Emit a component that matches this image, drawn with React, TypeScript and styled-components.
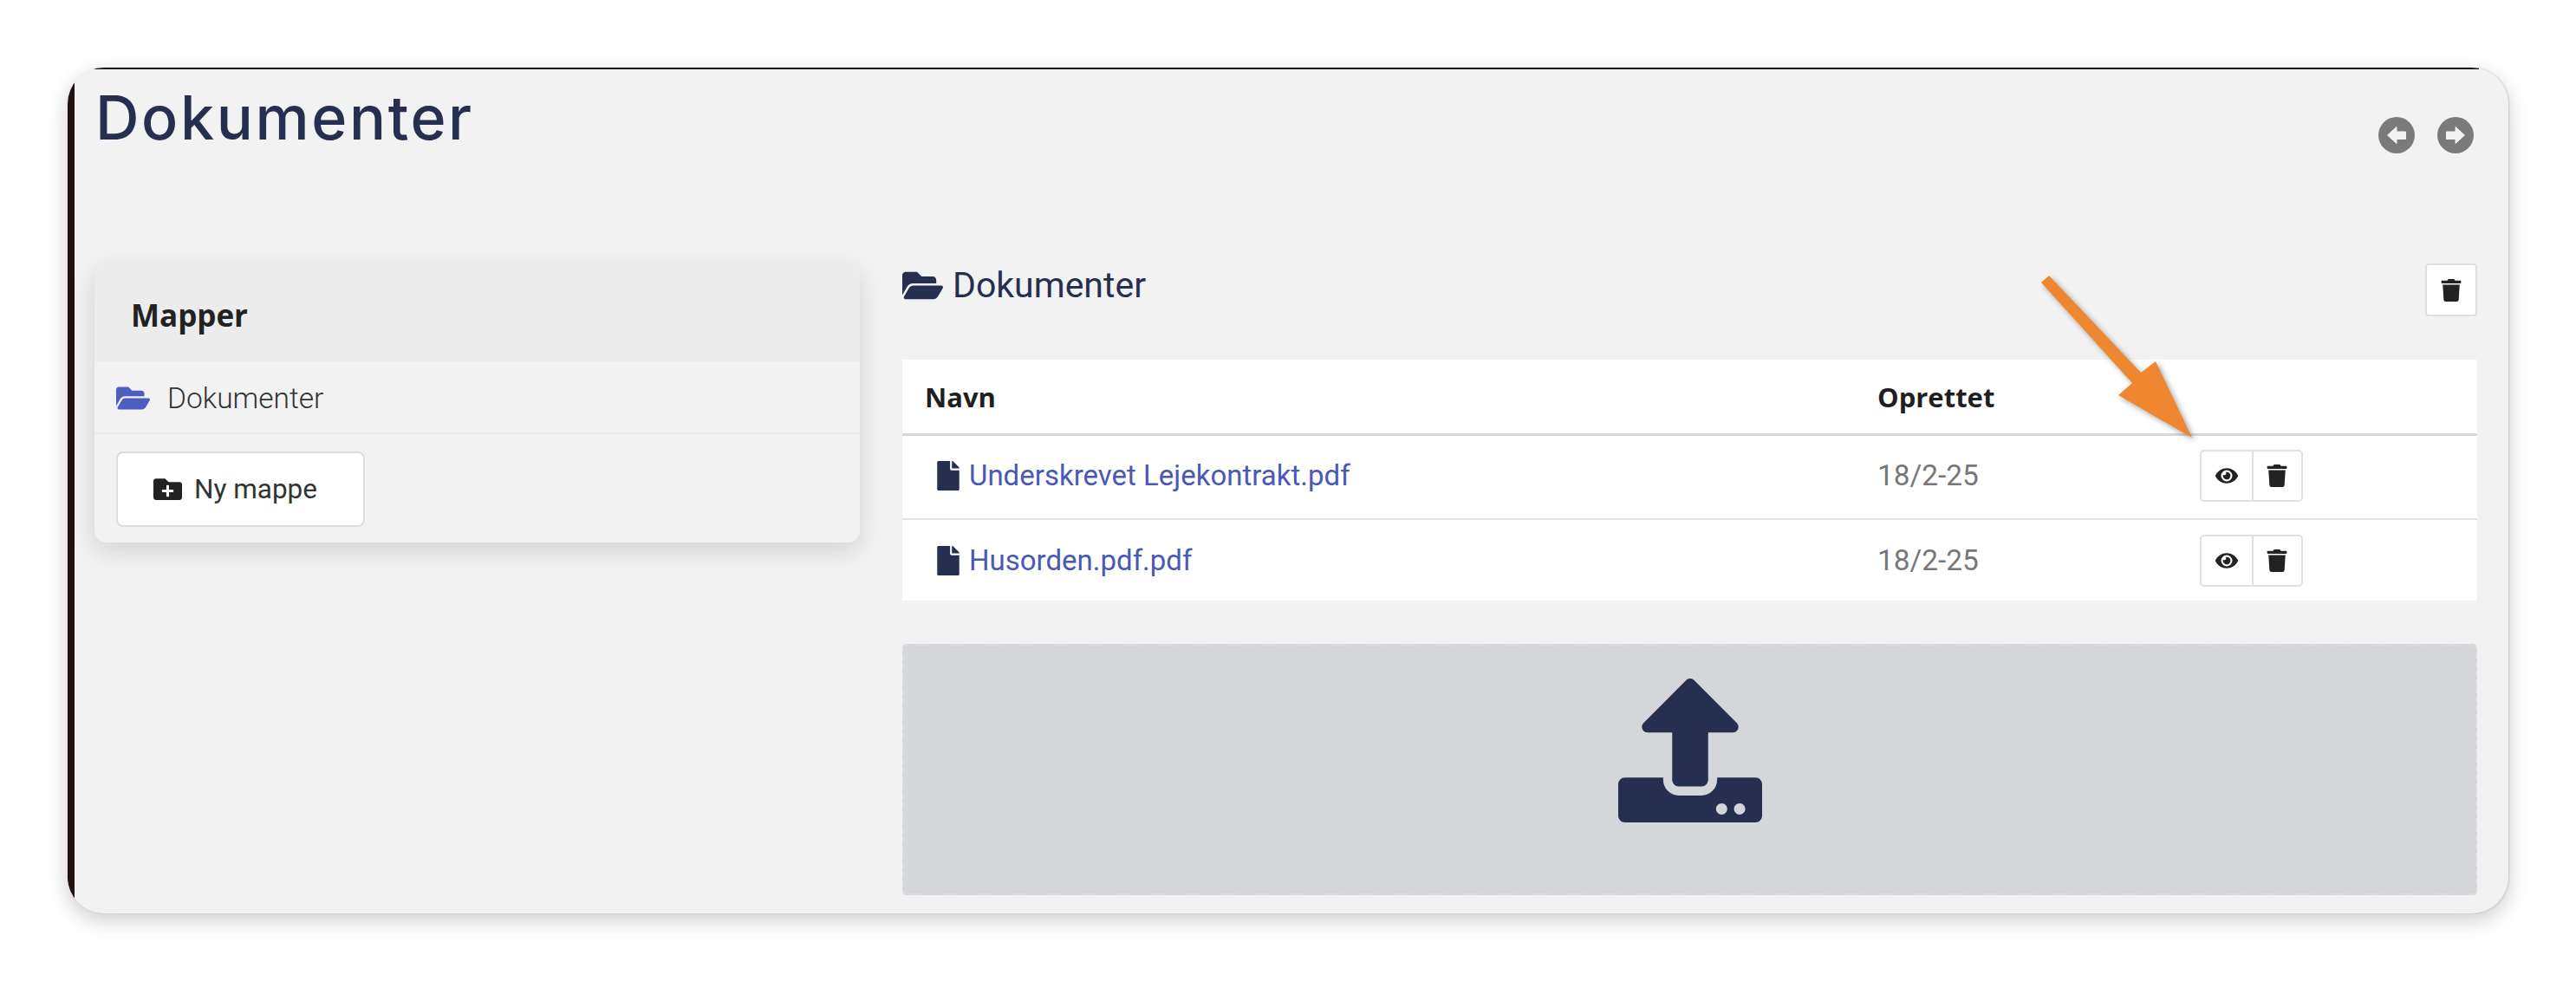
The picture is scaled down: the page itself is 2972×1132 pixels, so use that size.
import React from "react";
import styled, { createGlobalStyle } from "styled-components";
import { FaEye, FaFile, FaFolderOpen, FaFolderPlus, FaTrash, FaUpload } from "react-icons/fa";

const Global = createGlobalStyle`
  html, body { margin: 0; padding: 0; background: #fff; }
  body { font-family: Roboto, "Liberation Sans", sans-serif; width: 2972px; height: 1132px; overflow: hidden; }
`;
const Page = styled.div`
  padding: 78px;
  position: relative;
`;
const Panel = styled.main`
  box-sizing: border-box;
  position: relative;
  overflow: hidden;
  width: 2816px;
  height: 976px;
  background: #f2f2f2;
  border-radius: 42px;
  box-shadow: 0 8px 24px rgba(0,0,0,.2), 1px 0 2px rgba(0,0,0,.15);
  padding: 0 36px 0 31px;
  &::before {
    content: "";
    position: absolute;
    inset: 0 auto 0 0;
    width: 8px;
    background: #1f1210;
  }
  &::after {
    content: "";
    position: absolute;
    top: 0;
    left: 30px;
    right: 34px;
    height: 2px;
    background: #1a1a1a;
  }
`;
const TitleRow = styled.header`
  display: flex;
  justify-content: space-between;
  height: 224px;
`;
const Title = styled.h1`
  margin: 0;
  padding: 14px 0 0 1px;
  height: fit-content;
  font: 500 70px/88px Inter, "Noto Sans", sans-serif;
  letter-spacing: 2.6px;
  color: #262f4f;
`;
const Nav = styled.nav`
  display: flex;
  gap: 26px;
  padding: 57px 4px 0 0;
  height: fit-content;
  svg { display: block; width: 42px; height: 42px; }
`;
const Columns = styled.div`
  display: grid;
  grid-template-columns: 883px 1817px;
  column-gap: 49px;
`;
const Card = styled.aside`
  height: 324px;
  border-radius: 14px;
  overflow: hidden;
  background: #f2f2f2;
  box-shadow: 0 10px 28px rgba(0,0,0,.13);
`;
const CardHead = styled.div`
  height: 115px;
  background: #ececec;
  display: flex;
  align-items: center;
  padding: 7px 0 0 42px;
  font: 700 35px "Open Sans", sans-serif;
  color: #222;
  box-sizing: border-box;
`;
const FolderRow = styled.div`
  box-sizing: border-box;
  height: 84px;
  display: flex;
  align-items: center;
  gap: 20px;
  padding: 3px 0 0 25px;
  border-bottom: 2px solid #ebebeb;
  font: 300 33.5px Roboto, sans-serif;
  color: #333;
  svg { color: #4c5fc0; font-size: 39px; }
`;
const CardBody = styled.div`
  padding: 20px 25px;
`;
const NewButton = styled.button`
  box-sizing: border-box;
  width: 287px;
  height: 87px;
  background: #fff;
  border: 2px solid #dcdcdc;
  border-radius: 8px;
  display: flex;
  align-items: center;
  justify-content: center;
  gap: 14px;
  font: 400 31.5px Roboto, sans-serif;
  color: #333;
  padding: 0 12px 0 0;
  svg { color: #222; font-size: 33px; }
`;
const Heading = styled.div`
  height: 113px;
  display: flex;
  justify-content: space-between;
  align-items: flex-start;
`;
const HeadingLabel = styled.h2`
  margin: 0;
  display: flex;
  align-items: center;
  gap: 11px;
  font: 400 41px/54px Roboto, sans-serif;
  color: #262f4f;
  svg { font-size: 47px; }
`;
const IconButton = styled.button`
  box-sizing: border-box;
  width: 60px;
  height: 61px;
  margin-top: 2px;
  padding: 0;
  background: #fff;
  border: 2px solid #dedede;
  border-radius: 4px;
  display: flex;
  align-items: center;
  justify-content: center;
  color: #222;
  font-size: 26px;
`;
const Table = styled.div`
  background: #fff;
`;
const Row = styled.div<{ $head?: boolean; $last?: boolean }>`
  box-sizing: border-box;
  display: grid;
  grid-template-columns: 1097px 373px 1fr;
  align-items: center;
  height: ${p => (p.$head ? 88 : p.$last ? 93 : 97)}px;
  padding-bottom: ${p => (p.$head || p.$last ? 0 : 4)}px;
  border-bottom: ${p => (p.$head ? "3px solid #d8d8d8" : p.$last ? "none" : "2px solid #e2e2e2")};
`;
const HeadCell = styled.div`
  padding-left: 26px;
  font: 700 31px "Open Sans", sans-serif;
  color: #1f1f1f;
  & + & { padding-left: 28px; }
`;
const NameCell = styled.div`
  padding-left: 36px;
  display: flex;
  align-items: center;
  gap: 7px;
  svg { color: #262f4f; font-size: 34px; }
`;
const FileLink = styled.a`
  font: 400 33px Roboto, sans-serif;
  color: #4a59b5;
`;
const DateCell = styled.div`
  padding-left: 28px;
  font: 400 33.4px Roboto, sans-serif;
  color: #777;
`;
const ActionCell = styled.div`
  padding-left: 27px;
`;
const ActionGroup = styled.div`
  box-sizing: border-box;
  width: 119px;
  height: 60px;
  display: grid;
  grid-template-columns: 1fr 1fr;
  background: #fff;
  border: 2px solid #e0e0e0;
  border-radius: 5px;
`;
const ActionIcon = styled.span`
  display: flex;
  align-items: center;
  justify-content: center;
  color: #222;
  font-size: 26px;
  & + & { border-left: 2px solid #e0e0e0; }
`;
const Drop = styled.div`
  margin-top: 50px;
  height: 290px;
  box-sizing: border-box;
  padding-top: 38px;
  background: #d5d6da;
  border: 2px dashed #dcdde0;
  border-radius: 5px;
  display: flex;
  justify-content: center;
  color: #262f4f;
  font-size: 166px;
  svg { display: block; }
`;
const Callout = styled.svg`
  position: absolute;
  left: 2340px;
  top: 310px;
  width: 210px;
  height: 210px;
  overflow: visible;
  filter: drop-shadow(3px 3px 3px rgba(0,0,0,.35));
`;

const ArrowCircle = ({ flip }: { flip?: boolean }) => (
  <svg viewBox="0 0 42 42">
    <g transform={flip ? "translate(42 0) scale(-1 1)" : undefined}>
      <circle cx="21" cy="21" r="21" fill="#7a7a7a" />
      <path
        d="M10.5 21 L21 11.5 V17 H31.5 V25.5 H21 V30.5 Z"
        fill="#f2f2f2"
        stroke="#f2f2f2"
        strokeWidth="1"
        strokeLinejoin="round"
      />
    </g>
  </svg>
);

const files = ["Underskrevet Lejekontrakt.pdf", "Husorden.pdf.pdf"];

export default function App() {
  return (
    <Page>
      <Global />
      <Panel>
        <TitleRow>
          <Title>Dokumenter</Title>
          <Nav>
            <ArrowCircle />
            <ArrowCircle flip />
          </Nav>
        </TitleRow>
        <Columns>
          <Card>
            <CardHead>Mapper</CardHead>
            <FolderRow><FaFolderOpen />Dokumenter</FolderRow>
            <CardBody>
              <NewButton><FaFolderPlus />Ny mappe</NewButton>
            </CardBody>
          </Card>
          <section>
            <Heading>
              <HeadingLabel><FaFolderOpen />Dokumenter</HeadingLabel>
              <IconButton aria-label="Slet"><FaTrash /></IconButton>
            </Heading>
            <Table>
              <Row $head>
                <HeadCell>Navn</HeadCell>
                <HeadCell>Oprettet</HeadCell>
                <div />
              </Row>
              {files.map((f, i) => (
                <Row key={f} $last={i === files.length - 1}>
                  <NameCell><FaFile /><FileLink>{f}</FileLink></NameCell>
                  <DateCell>18/2-25</DateCell>
                  <ActionCell>
                    <ActionGroup>
                      <ActionIcon><FaEye /></ActionIcon>
                      <ActionIcon><FaTrash /></ActionIcon>
                    </ActionGroup>
                  </ActionCell>
                </Row>
              ))}
            </Table>
            <Drop><FaUpload /></Drop>
          </section>
        </Columns>
      </Panel>
      <Callout viewBox="2340 310 210 210">
        <polygon fill="#ef8730" points="2355,326 2364,318 2470,430 2487,417 2529,505 2444,456 2460,442" />
      </Callout>
    </Page>
  );
}
